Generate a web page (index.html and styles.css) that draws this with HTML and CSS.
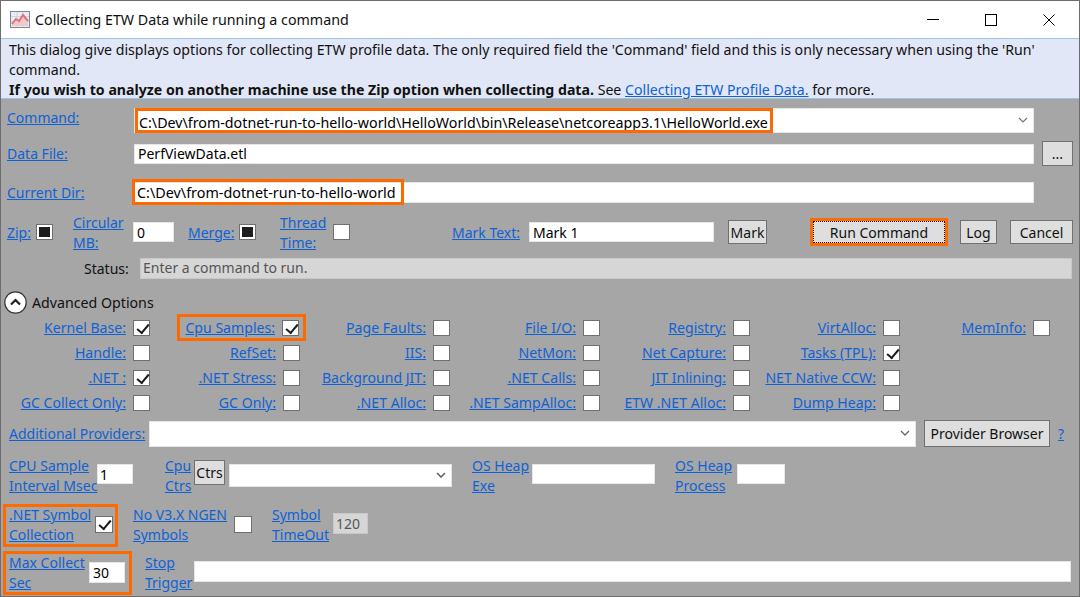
FILE: index.html
```html
<!DOCTYPE html>
<html lang="en">
<head>
    <meta charset="UTF-8">
    <meta name="viewport" content="width=device-width, initial-scale=1.0">
    <title>Collecting ETW Data while running a command</title>
    <link rel="stylesheet" href="styles.css">
</head>
<body>
    <div class="window">
        <div class="titlebar">
            <svg class="app-icon" width="20" height="17" viewBox="0 0 20 17">
                <rect x="0.5" y="0.5" width="19" height="16" fill="#e8ecf4" stroke="#7f8896"/>
                <path d="M1 5.5 H19 M1 10.5 H19 M7 1 V16 M13 1 V16" stroke="#cdd3e0"/>
                <path d="M2 13 L6 8 L9 10 L13 4 L18 10 V15 H2 Z" fill="#f2c9cb"/>
                <path d="M2 13 L6 8 L9 10 L13 4 L18 10" fill="none" stroke="#e0737b" stroke-width="2"/>
            </svg>
            <span class="title">Collecting ETW Data while running a command</span>
            <div class="controls">
                <svg width="12" height="12" viewBox="0 0 12 12"><path d="M0 5.5 H12" stroke="#000"/></svg>
                <svg width="12" height="12" viewBox="0 0 12 12"><rect x="0.5" y="0.5" width="11" height="11" fill="none" stroke="#000"/></svg>
                <svg width="12" height="12" viewBox="0 0 12 12"><path d="M0.5 0.5 L11.5 11.5 M11.5 0.5 L0.5 11.5" stroke="#000"/></svg>
            </div>
        </div>

        <div class="info">
            <p>This dialog give displays options for collecting ETW profile data. The only required field the 'Command' field and this is only necessary when using the 'Run' command.</p>
            <p><strong>If you wish to analyze on another machine use the Zip option when collecting data.</strong> See <a href="#">Collecting ETW Profile Data.</a> for more.</p>
        </div>

        <div class="panel">
            <div class="row row-command">
                <a href="#" class="lbl-main">Command:</a>
                <div class="field combo wide">
                    <span class="mark mark-command"><span>C:\Dev\from-dotnet-run-to-hello-world\HelloWorld\bin\Release\netcoreapp3.1\HelloWorld.exe</span></span>
                    <svg class="chev" width="10" height="6" viewBox="0 0 10 6"><path d="M1 1 L5 5 L9 1" fill="none" stroke="#777" stroke-width="1.2"/></svg>
                </div>
            </div>

            <div class="row row-data">
                <a href="#" class="lbl-main">Data File:</a>
                <div class="field wide data-field">PerfViewData.etl</div>
                <button class="btn btn-dots">...</button>
            </div>

            <div class="row row-dir">
                <a href="#" class="lbl-main">Current Dir:</a>
                <div class="field wide dir-field">
                    <span class="mark mark-dir">C:\Dev\from-dotnet-run-to-hello-world</span>
                </div>
            </div>

            <div class="row row-run">
                <a href="#" class="zip-lbl">Zip:</a>
                <span class="check filled zip-check"></span>
                <a href="#" class="two-line circ-lbl">Circular<br>MB:</a>
                <div class="field circ-input">0</div>
                <a href="#" class="merge-lbl">Merge:</a>
                <span class="check filled merge-check"></span>
                <a href="#" class="two-line thread-lbl">Thread<br>Time:</a>
                <span class="check thread-check"></span>
                <a href="#" class="marktext-lbl">Mark Text:</a>
                <div class="field mark-input">Mark 1</div>
                <button class="btn btn-mark">Mark</button>
                <div class="run-wrap"><button class="btn btn-run"><span>Run Command</span></button></div>
                <button class="btn btn-log">Log</button>
                <button class="btn btn-cancel">Cancel</button>
            </div>

            <div class="row row-status">
                <span class="status-lbl">Status:</span>
                <div class="status-field">Enter a command to run.</div>
            </div>

            <div class="row row-advanced">
                <span class="expander">
                    <svg width="23" height="23" viewBox="0 0 23 23">
                        <circle cx="11.5" cy="11.5" r="10.7" fill="#fff" stroke="#333" stroke-width="1.2"/>
                        <path d="M7 13.5 L11.5 9 L16 13.5" fill="none" stroke="#222" stroke-width="2.2"/>
                    </svg>
                </span>
                <span>Advanced Options</span>
            </div>

            <div class="options">
                <div class="opt"><a href="#">Kernel Base:</a><span class="check on"></span></div>
                <div class="opt opt-mark"><span class="mark mark-cpu"><a href="#">Cpu Samples:</a><span class="check on"></span></span></div>
                <div class="opt"><a href="#">Page Faults:</a><span class="check"></span></div>
                <div class="opt"><a href="#">File I/O:</a><span class="check"></span></div>
                <div class="opt"><a href="#">Registry:</a><span class="check"></span></div>
                <div class="opt"><a href="#">VirtAlloc:</a><span class="check"></span></div>
                <div class="opt"><a href="#">MemInfo:</a><span class="check"></span></div>

                <div class="opt"><a href="#">Handle:</a><span class="check"></span></div>
                <div class="opt"><a href="#">RefSet:</a><span class="check"></span></div>
                <div class="opt"><a href="#">IIS:</a><span class="check"></span></div>
                <div class="opt"><a href="#">NetMon:</a><span class="check"></span></div>
                <div class="opt"><a href="#">Net Capture:</a><span class="check"></span></div>
                <div class="opt"><a href="#">Tasks (TPL):</a><span class="check on"></span></div>
                <div class="opt"></div>

                <div class="opt"><a href="#">.NET :</a><span class="check on"></span></div>
                <div class="opt"><a href="#">.NET Stress:</a><span class="check"></span></div>
                <div class="opt"><a href="#">Background JIT:</a><span class="check"></span></div>
                <div class="opt"><a href="#">.NET Calls:</a><span class="check"></span></div>
                <div class="opt"><a href="#">JIT Inlining:</a><span class="check"></span></div>
                <div class="opt"><a href="#">NET Native CCW:</a><span class="check"></span></div>
                <div class="opt"></div>

                <div class="opt"><a href="#">GC Collect Only:</a><span class="check"></span></div>
                <div class="opt"><a href="#">GC Only:</a><span class="check"></span></div>
                <div class="opt"><a href="#">.NET Alloc:</a><span class="check"></span></div>
                <div class="opt"><a href="#">.NET SampAlloc:</a><span class="check"></span></div>
                <div class="opt"><a href="#">ETW .NET Alloc:</a><span class="check"></span></div>
                <div class="opt"><a href="#">Dump Heap:</a><span class="check"></span></div>
                <div class="opt"></div>
            </div>

            <div class="row row-providers">
                <a href="#" class="prov-lbl">Additional Providers:</a>
                <div class="field combo prov-field">
                    <svg class="chev" width="10" height="6" viewBox="0 0 10 6"><path d="M1 1 L5 5 L9 1" fill="none" stroke="#666" stroke-width="1.3"/></svg>
                </div>
                <button class="btn btn-prov">Provider Browser</button>
                <a href="#" class="help">?</a>
            </div>

            <div class="row row-cpu">
                <a href="#" class="two-line sample-lbl">CPU Sample<br>Interval Msec</a>
                <div class="field sample-input">1</div>
                <a href="#" class="two-line ctrs-lbl">Cpu<br>Ctrs</a>
                <button class="btn btn-ctrs">Ctrs</button>
                <div class="field combo ctrs-field">
                    <svg class="chev" width="10" height="6" viewBox="0 0 10 6"><path d="M1 1 L5 5 L9 1" fill="none" stroke="#666" stroke-width="1.6"/></svg>
                </div>
                <a href="#" class="two-line heap-lbl">OS Heap<br>Exe</a>
                <div class="field heap-exe"></div>
                <a href="#" class="two-line heap-lbl">OS Heap<br>Process</a>
                <div class="field heap-proc"></div>
            </div>

            <div class="row row-symbol">
                <div class="mark mark-symbol">
                    <a href="#" class="two-line symbol-lbl">.NET Symbol<br>Collection</a>
                    <span class="check on symbol-check"></span>
                </div>
                <a href="#" class="two-line ngen-lbl">No V3.X NGEN<br>Symbols</a>
                <span class="check symbol-check"></span>
                <a href="#" class="two-line timeout-lbl">Symbol<br>TimeOut</a>
                <div class="timeout-field">120</div>
            </div>

            <div class="row row-max">
                <div class="mark mark-max">
                    <a href="#" class="two-line max-lbl">Max Collect<br>Sec</a>
                    <div class="field max-input">30</div>
                </div>
                <a href="#" class="two-line stop-lbl">Stop<br>Trigger</a>
                <div class="field stop-field"></div>
            </div>
        </div>
    </div>
</body>
</html>
```

FILE: styles.css
```css
* {
    box-sizing: border-box;
}
html, body {
    margin: 0;
    height: 100%;
    overflow: hidden;
}
body {
    font-family: "Noto Sans", sans-serif;
    font-size: 14px;
    color: #111;
}
a {
    color: #0f62d6;
}
p {
    margin: 0;
}
.window {
    height: 597px;
    border: 1px solid #6d6d6d;
    display: flex;
    flex-direction: column;
    background-color: #a6a6a6;
}
.titlebar {
    height: 37px;
    flex: none;
    background-color: white;
    display: flex;
    align-items: center;
    padding: 0 0 0 9px;
}
.app-icon {
    flex: none;
}
.title {
    margin-left: 5px;
    white-space: nowrap;
    font-size: 14.25px;
}
.controls {
    margin-left: auto;
    margin-right: 24px;
    display: flex;
    gap: 46px;
}
.info {
    height: 61px;
    flex: none;
    padding: 1px 0 0 8px;
    line-height: 20px;
    font-size: 14.15px;
    background-color: #e1e7f6;
    border: 1px solid #9cc3e8;
    border-left-width: 0;
    border-right-width: 0;
}
.info p:first-child {
    width: 1050px;
}
.panel {
    flex: 1;
}
.row {
    display: flex;
    align-items: center;
    white-space: nowrap;
}
.field {
    background-color: white;
    border: 1px solid #e6e6e6;
    display: flex;
    align-items: center;
    height: 20px;
    padding-left: 3px;
    color: #000;
    flex: none;
}
.combo {
    position: relative;
}
.chev {
    position: absolute;
    right: 5px;
    top: 50%;
    margin-top: -4px;
}
.wide {
    width: 900px;
}
.lbl-main {
    width: 133px;
    padding-left: 6px;
    flex: none;
}
.mark {
    border: 3px solid #ff6a00;
}
.check {
    display: inline-block;
    position: relative;
    flex: none;
    width: 17px;
    height: 16px;
    background-color: white;
    border: 1px solid #6f6f6f;
}
.check.filled::after {
    content: "";
    position: absolute;
    left: 2px;
    top: 2px;
    width: 11px;
    height: 10px;
    background-color: #1d1d1d;
}
.check.on::after {
    content: "";
    position: absolute;
    left: 3px;
    top: 0;
    width: 10px;
    height: 5px;
    transform: translateY(3px) rotate(-50deg);
    border-left: 2.6px solid #1d1d1d;
    border-bottom: 2.6px solid #1d1d1d;
}
.btn {
    font-family: inherit;
    font-size: 14px;
    color: #111;
    background-color: #dedede;
    border: 1px solid #707070;
    padding: 0;
    flex: none;
    height: 24px;
}
.two-line {
    line-height: 20px;
    flex: none;
}

/* command rows */
.row-command {
    margin-top: 9px;
    height: 25px;
}
.row-command .lbl-main {
    margin-top: -6px;
}
.row-command .field {
    height: 25px;
    padding-left: 0;
}
.mark-command {
    height: 25px;
    width: 638px;
    padding-left: 1px;
    display: flex;
    align-items: center;
    overflow: hidden;
    font-size: 14.25px;
}
.mark-command span {
    padding-top: 3px;
}
.row-data {
    margin-top: 8px;
    height: 25px;
}
.btn-dots {
    width: 31px;
    height: 25px;
    margin-left: 8px;
}
.row-dir {
    margin-top: 13px;
    height: 26px;
}
.dir-field {
    height: 21px;
    padding-left: 0;
}
.mark-dir {
    margin-left: -3px;
    width: 272px;
    height: 26px;
    padding-left: 2px;
    display: flex;
    align-items: center;
    font-size: 14.35px;
}

/* zip, merge, mark text, run */
.row-run {
    margin-top: 12px;
    height: 30px;
}
.row-run .two-line {
    margin-top: 2px;
}
.zip-lbl {
    margin-left: 6px;
    width: 24px;
    flex: none;
}
.zip-check {
    margin-left: 5px;
}
.circ-lbl {
    margin-left: 20px;
    width: 52px;
}
.circ-input {
    margin-left: 8px;
    width: 41px;
}
.merge-lbl {
    margin-left: 14px;
    width: 47px;
    flex: none;
}
.merge-check {
    margin-left: 4px;
}
.thread-lbl {
    margin-left: 24px;
    width: 50px;
}
.thread-check {
    margin-left: 3px;
}
.marktext-lbl {
    margin-left: 102px;
    width: 68px;
    flex: none;
}
.mark-input {
    margin-left: 9px;
    width: 185px;
}
.btn-mark {
    margin-left: 14px;
    width: 39px;
}
.run-wrap {
    margin-left: 43px;
    border: 3px solid #ff6a00;
    height: 28px;
    width: 138px;
    flex: none;
}
.btn-run {
    width: 132px;
    height: 22px;
    display: block;
    border: none;
}
.btn-run span {
    display: block;
    border: 1px dotted #111;
    line-height: 21px;
    height: 22px;
}
.btn-log {
    margin-left: 12px;
    width: 37px;
}
.btn-cancel {
    margin-left: 13px;
    width: 63px;
}

/* status */
.row-status {
    margin-top: 11px;
    height: 21px;
}
.status-lbl {
    margin-left: 83px;
    width: 56px;
}
.status-field {
    width: 932px;
    height: 21px;
    background-color: #d6d6d6;
    border: 1px solid #c8c8c8;
    color: #555;
    padding-left: 2px;
    line-height: 18px;
}

/* advanced options */
.row-advanced {
    margin-top: 11px;
    height: 24px;
    font-size: 14.2px;
}
.expander {
    margin-left: 3px;
    margin-right: 5px;
    display: flex;
}
.options {
    margin-top: 1px;
    margin-left: -1px;
    display: grid;
    grid-template-columns: repeat(7, 150px);
    grid-auto-rows: 25px;
    white-space: nowrap;
    font-size: 14.1px;
}
.opt {
    display: flex;
    align-items: center;
    justify-content: flex-end;
    gap: 7px;
}
.mark-cpu {
    display: flex;
    align-items: center;
    gap: 7px;
    padding: 0 4px 0 5px;
    height: 27px;
    margin-right: -6px;
}

/* providers */
.row-providers {
    margin-top: 5px;
    height: 27px;
}
.prov-lbl {
    margin-left: 8px;
    width: 140px;
    flex: none;
}
.prov-field {
    width: 767px;
    height: 26px;
}
.btn-prov {
    margin-left: 8px;
    width: 126px;
    height: 27px;
}
.help {
    margin-left: 8px;
}

/* cpu counters */
.row-cpu {
    margin-top: 12px;
    height: 40px;
}
.row-cpu .two-line {
    margin-top: -6px;
}
.sample-lbl {
    margin-left: 8px;
    width: 88px;
}
.sample-input {
    width: 36px;
    margin-top: -10px;
    padding-left: 2px;
}
.ctrs-lbl {
    margin-left: 32px;
    width: 29px;
}
.btn-ctrs {
    width: 31px;
    height: 25px;
    margin-top: -13px;
}
.ctrs-field {
    margin-left: 4px;
    width: 223px;
    height: 23px;
    margin-top: -7px;
}
.heap-lbl {
    margin-left: 20px;
    width: 60px;
}
.heap-exe {
    width: 123px;
    margin-top: -10px;
}
.heap-proc {
    width: 48px;
    margin-left: 2px;
    margin-top: -10px;
}

/* symbol rows */
.row-symbol {
    margin-top: 4px;
    height: 44px;
}
.symbol-check {
    width: 18px;
    height: 17px;
    margin-top: -2px;
}
.mark-symbol {
    margin-left: 2px;
    width: 115px;
    height: 43px;
    display: flex;
    align-items: center;
    padding-left: 3px;
}
.symbol-lbl {
    width: 86px;
}
.ngen-lbl {
    margin-left: 15px;
    width: 101px;
}
.timeout-lbl {
    margin-left: 20px;
    width: 61px;
}
.timeout-field {
    width: 35px;
    height: 21px;
    background-color: #d6d6d6;
    border: 1px solid #c8c8c8;
    color: #555;
    padding-left: 2px;
    line-height: 19px;
    margin-top: -3px;
}
.row-max {
    margin-top: 4px;
    height: 44px;
}
.mark-max {
    margin-left: 2px;
    width: 129px;
    height: 44px;
    display: flex;
    align-items: center;
    padding-left: 3px;
}
.max-lbl {
    width: 80px;
}
.max-input {
    width: 36px;
    height: 21px;
    margin-top: -2px;
}
.stop-lbl {
    margin-left: 13px;
    width: 49px;
}
.stop-field {
    width: 877px;
    height: 21px;
    margin-top: -3px;
}
```
